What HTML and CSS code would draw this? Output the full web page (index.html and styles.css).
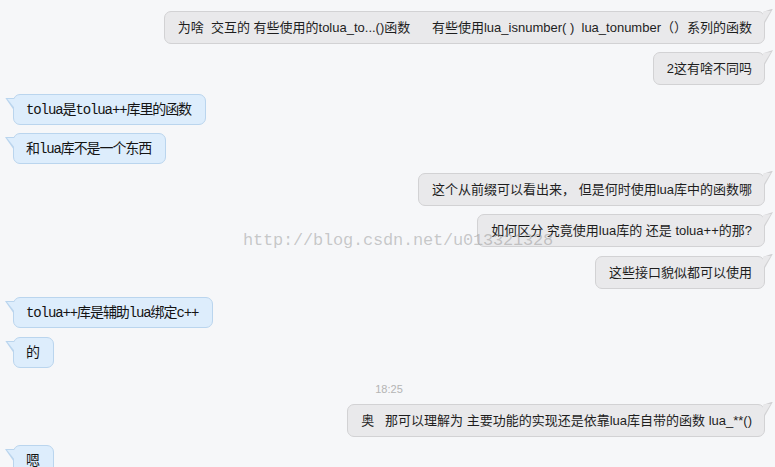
FILE: index.html
```html
<!DOCTYPE html>
<html><head><meta charset="utf-8">
 <title>Chat</title>
 <link rel="stylesheet" href="styles.css">
</head>
<body>
   <div class="chat">
      <div class="time time-top">18:20</div>
      <div class="row mine"><div class="bubble">为啥  交互的 有些使用的tolua_to...()函数      有些使用lua_isnumber( )  lua_tonumber（）系列的函数</div></div>
      <div class="row mine"><div class="bubble">2这有啥不同吗</div></div>
      <div class="row theirs"><div class="bubble">tolua是tolua++库里的函数</div></div>
      <div class="row theirs"><div class="bubble">和lua库不是一个东西</div></div>
      <div class="row mine"><div class="bubble">这个从前缀可以看出来， 但是何时使用lua库中的函数哪</div></div>
      <div class="row mine"><div class="bubble">如何区分 究竟使用lua库的 还是 tolua++的那?</div></div>
      <div class="row mine"><div class="bubble">这些接口貌似都可以使用</div></div>
      <div class="row theirs"><div class="bubble">tolua++库是辅助lua绑定c++</div></div>
      <div class="row theirs"><div class="bubble">的</div></div>
      <div class="time">18:25</div>
      <div class="row mine"><div class="bubble">奥   那可以理解为 主要功能的实现还是依靠lua库自带的函数 lua_**()</div></div>
      <div class="row theirs"><div class="bubble">嗯</div></div>
   </div>
   <div class="watermark">http://blog.csdn.net/u013321328</div>
</body></html>
```

FILE: styles.css
```css
html, body {
  margin: 0;
  padding: 0;
  height: 100%;
  overflow: hidden;
  background: #f6f7f9;
}
body {
  position: relative;
}
.chat {
  display: flex;
  flex-direction: column;
  gap: 8.5px;
  padding: 0 10px 0 13px;
}
.time {
  text-align: center;
  font-family: "Liberation Sans", "Noto Sans", sans-serif;
  font-size: 11px;
  line-height: 14px;
  color: #b4b4b4;
  margin: 6px 0 -1px;
}
.time-top {
  margin-top: -11px;
  padding-left: 6px;
}
.row {
  display: flex;
}
.row.mine {
  justify-content: flex-end;
}
.bubble {
  position: relative;
  white-space: pre;
  border-radius: 7px;
  border: 1px solid;
}
.mine .bubble {
  background: #e9e9eb;
  border-color: #d2d2d4;
  color: #1e1e1e;
  font-family: "Liberation Sans", "Noto Sans CJK SC", sans-serif;
  font-size: 13px;
  line-height: 21px;
  padding: 5px 12px 5px 13px;
}
.theirs .bubble {
  background: #ddedfc;
  border-color: #bad5ee;
  color: #141414;
  font-family: "Liberation Mono", "Noto Sans CJK SC", monospace;
  font-size: 14px;
  letter-spacing: -1.1px;
  line-height: 20px;
  padding: 5px 14px 4px 12px;
}
.bubble::before,
.bubble::after {
  content: "";
  position: absolute;
}
.mine .bubble::before {
  top: -3px;
  right: -9px;
  width: 9px;
  height: 16px;
  background: #d2d2d4;
  clip-path: polygon(0 3px, 100% 0, 0 100%);
}
.mine .bubble::after {
  top: -1px;
  right: -7px;
  width: 8px;
  height: 13px;
  background: #e9e9eb;
  clip-path: polygon(0 1px, 100% 0, 0 100%);
}
.theirs .bubble::before {
  top: 3px;
  left: -9px;
  width: 9px;
  height: 13px;
  background: #bad5ee;
  clip-path: polygon(0 0, 100% 0, 100% 100%);
}
.theirs .bubble::after {
  top: 4px;
  left: -7px;
  width: 8px;
  height: 10px;
  background: #ddedfc;
  clip-path: polygon(0 0, 100% 0, 100% 100%);
}
.watermark {
  position: absolute;
  left: 243px;
  top: 231px;
  font-family: "Liberation Mono", monospace;
  font-size: 17px;
  letter-spacing: -0.2px;
  color: rgba(140, 140, 140, 0.45);
  pointer-events: none;
}
```
